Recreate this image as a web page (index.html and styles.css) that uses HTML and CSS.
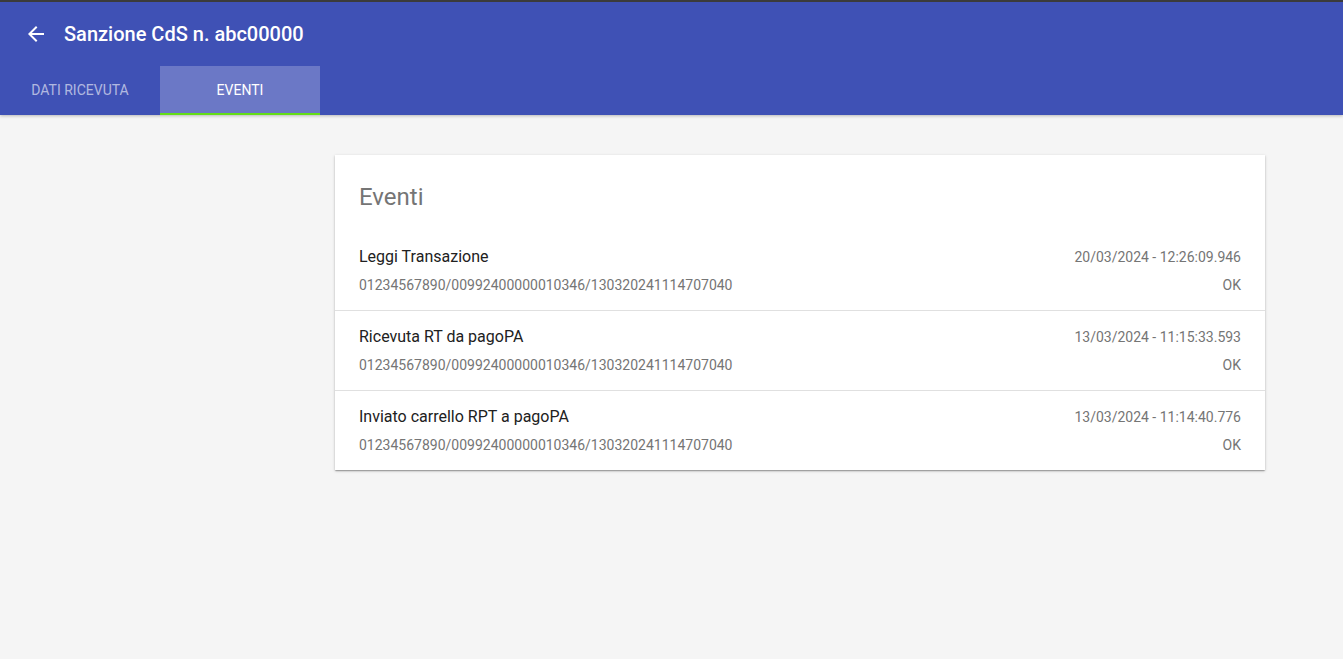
FILE: index.html
```html
<!DOCTYPE html>
<html lang="it">
<head>
<meta charset="utf-8">
<title>Sanzione CdS</title>
<link rel="stylesheet" href="styles.css">
</head>
<body>
<header class="appbar">
  <div class="toolbar">
    <button class="back" aria-label="Indietro">
      <svg width="24" height="24" viewBox="0 0 24 24"><path fill="#fff" d="M20 11H7.83l5.59-5.59L12 4l-8 8 8 8 1.41-1.41L7.83 13H20v-2z"/></svg>
    </button>
    <h1 class="title">Sanzione CdS n. abc00000</h1>
  </div>
  <nav class="tabs">
    <div class="tab">DATI RICEVUTA</div>
    <div class="tab active">EVENTI</div>
  </nav>
</header>
<main class="content">
  <section class="card">
    <h2 class="card-title">Eventi</h2>
    <ul class="list">
      <li class="item">
        <div class="line"><span class="name">Leggi Transazione</span><span class="meta">20/03/2024 - 12:26:09.946</span></div>
        <div class="line"><span class="sub">01234567890/00992400000010346/130320241114707040</span><span class="meta">OK</span></div>
      </li>
      <li class="item">
        <div class="line"><span class="name">Ricevuta RT da pagoPA</span><span class="meta">13/03/2024 - 11:15:33.593</span></div>
        <div class="line"><span class="sub">01234567890/00992400000010346/130320241114707040</span><span class="meta">OK</span></div>
      </li>
      <li class="item">
        <div class="line"><span class="name">Inviato carrello RPT a pagoPA</span><span class="meta">13/03/2024 - 11:14:40.776</span></div>
        <div class="line"><span class="sub">01234567890/00992400000010346/130320241114707040</span><span class="meta">OK</span></div>
      </li>
    </ul>
  </section>
</main>
</body>
</html>
```
FILE: styles.css
```css
* { box-sizing: border-box; }
html, body { margin: 0; height: 100%; }
body {
  font-family: Roboto, "Liberation Sans", sans-serif;
  background: #f5f5f5;
}
.appbar {
  background: #3f51b5;
  border-top: 2px solid #3b3b3b;
  box-shadow: 0 1px 3px rgba(0,0,0,0.25);
  position: relative;
}
.toolbar {
  height: 64px;
  display: flex;
  align-items: center;
  padding-left: 24px;
}
.back {
  background: none;
  border: 0;
  padding: 0;
  width: 24px;
  height: 24px;
  margin-right: 16px;
  display: flex;
}
.title {
  margin: 0;
  color: #fff;
  font-size: 20px;
  font-weight: 500;
  letter-spacing: 0;
}
.tabs {
  display: flex;
  height: 49px;
}
.tab {
  width: 160px;
  display: flex;
  align-items: center;
  justify-content: center;
  font-size: 14px;
  color: rgba(255,255,255,0.6);
  border-bottom: 2px solid transparent;
}
.tab.active {
  background: #6b78c6;
  color: #fff;
  border-bottom-color: #64dd17;
}
.content {
  padding: 40px 78px 40px 335px;
}
.card {
  background: #fff;
  box-shadow: 0 1px 1px rgba(0,0,0,0.14), 0 2px 1px -1px rgba(0,0,0,0.12), 0 1px 3px rgba(0,0,0,0.2);
  padding-top: 28px;
}
.card-title {
  margin: 0 0 20px 24px;
  font-size: 24px;
  line-height: 28px;
  font-weight: 400;
  color: #757575;
}
.list { list-style: none; margin: 0; padding: 0; }
.item {
  padding: 17px 24px 0 24px;
  height: 80px;
  border-bottom: 1px solid #e0e0e0;
}
.item:last-child { border-bottom: 0; height: 79px; }
.line {
  display: flex;
  justify-content: space-between;
  align-items: center;
}
.line + .line { margin-top: 9px; }
.name { font-size: 16px; line-height: 18px; color: #212121; }
.sub { font-size: 14px; line-height: 20px; color: #757575; }
.meta { font-size: 14px; line-height: 18px; color: #757575; }
.line + .line .meta { line-height: 20px; }
```
